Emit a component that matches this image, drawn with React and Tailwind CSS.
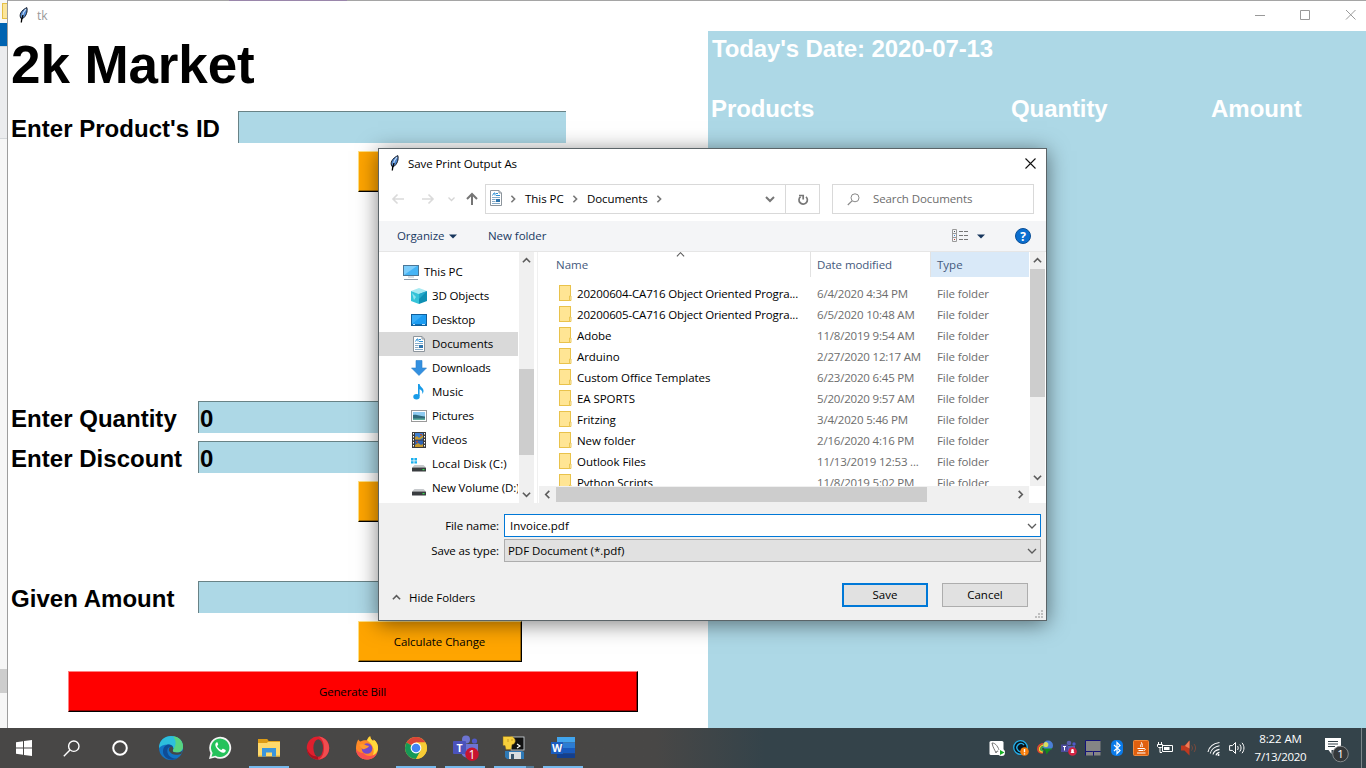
import React from "react";

const places = [
  { name: "3D Objects", icon: "cube", tr: "tracking-[-0.13px]" },
  { name: "Desktop", icon: "desktop", tr: "tracking-[-0.2px]" },
  { name: "Documents", icon: "doc", tr: "tracking-[-0.05px]", selected: true },
  { name: "Downloads", icon: "down", tr: "tracking-[-0.15px]" },
  { name: "Music", icon: "music", tr: "tracking-[0px]" },
  { name: "Pictures", icon: "picture", tr: "tracking-[-0.15px]" },
  { name: "Videos", icon: "video", tr: "tracking-[-0.1px]" },
  { name: "Local Disk (C:)", icon: "diskc", tr: "tracking-[0.08px]" },
  { name: "New Volume (D:)", icon: "disk", tr: "tracking-[-0.1px]" },
];

const files = [
  ["20200604-CA716 Object Oriented Progra...", "6/4/2020 4:34 PM"],
  ["20200605-CA716 Object Oriented Progra...", "6/5/2020 10:48 AM"],
  ["Adobe", "11/8/2019 9:54 AM"],
  ["Arduino", "2/27/2020 12:17 AM"],
  ["Custom Office Templates", "6/23/2020 6:45 PM"],
  ["EA SPORTS", "5/20/2020 9:57 AM"],
  ["Fritzing", "3/4/2020 5:46 PM"],
  ["New folder", "2/16/2020 4:16 PM"],
  ["Outlook Files", "11/13/2019 12:53 ..."],
  ["Python Scripts", "11/8/2019 5:02 PM"],
];

function Feather() {
  return (
    <svg width="12" height="16" viewBox="0 0 12 16" className="shrink-0">
      <path d="M3 11.5 C0.8 8 3 3.5 8.8 0.6 C9.8 4 8.5 9.5 4 12 Z" fill="#4d86cf" stroke="#10151f" strokeWidth="1" />
      <path d="M8 1.8 C5.5 4.5 4.6 7 4 10" stroke="#cfe2f7" strokeWidth="1.1" fill="none" />
      <path d="M5 8 C4 10.5 3.4 12.5 3.3 15.5" stroke="#000" strokeWidth="1.3" fill="none" />
    </svg>
  );
}

function DocIcon() {
  return (
    <svg width="16" height="16" viewBox="0 0 16 16" className="shrink-0">
      <path d="M2.5 .5h8.500l2.500 2.500v12.500h-11z" fill="#fff" stroke="#8d959c" />
      <path d="M11 .5v2.500h2.500" fill="none" stroke="#8d959c" />
      <path d="M4.500 5.500 6 3h1v2.500M8 3.500h2M8 5.500h4" stroke="#2a8fd4" fill="none" />
      <path d="M4 7.500h8M4 9.500h3.500M4 11.500h3.500M4 13.500h8" stroke="#86abc8" />
      <rect x="8" y="9" width="4" height="3" fill="#2f75ad" />
    </svg>
  );
}

function PlaceIcon({ kind }) {
  if (kind === "doc") return <DocIcon />;
  return (
    <svg width="16" height="16" viewBox="0 0 16 16" className="shrink-0">
      {kind === "pc" && (
        <>
          <rect x=".5" y="1.500" width="15" height="10" fill="#45b4f5" stroke="#4a7797" />
          <path d="M1 11 14 2H1z" fill="#7ccdfb" />
          <path d="M5 13h6" stroke="#b4bfc8" />
          <path d="M1 15.500h14" stroke="#8f9dab" />
        </>
      )}
      {kind === "cube" && (
        <>
          <path d="M8 0 16 3 8 6 0 3z" fill="#a8eaf2" />
          <path d="M0 3 8 6v10L0 13z" fill="#35c3d8" />
          <path d="M16 3 8 6v10l8-3z" fill="#0d8fb3" />
          <path d="M1 5 5 9 3 12z" fill="#8fe3ee" />
          <path d="M16 3 8 6v5z" fill="#22a9cb" />
        </>
      )}
      {kind === "desktop" && (
        <>
          <rect x=".5" y="2.500" width="15" height="11" fill="#1b9cf2" stroke="#0f5f9c" />
          <path d="M1 12 12 3H1z" fill="#38adf8" />
          <path d="M1 12.500h14" stroke="#0b6db5" />
          <path d="M2 12.500h2M11 12.500h3" stroke="#b8e0fb" />
        </>
      )}
      {kind === "down" && <path d="M5 .5h6v7.500h4.500L8 15.500.5 8H5z" fill="#3390e0" stroke="#2b7fca" strokeWidth=".6" />}
      {kind === "music" && (
        <>
          <path d="M7 0h1.600c.4 3 4.200 3.800 3.900 7.200-.1 1.300-.7 2.100-1.300 2.800.6-2.500-.5-4-2.600-4.700V12H7z" fill="#189be8" />
          <ellipse cx="5.500" cy="12.800" rx="3.200" ry="2.700" fill="#189be8" />
        </>
      )}
      {kind === "picture" && (
        <>
          <rect x=".5" y="2.500" width="15" height="11" fill="#fff" stroke="#9a9a9a" />
          <rect x="2" y="4" width="12" height="8" fill="#8fcbf0" />
          <path d="M2 7c4-.8 6 1.200 12 1.500V12H2z" fill="#2f6b7b" />
          <path d="M2 10.500h12V12H2z" fill="#5fae9e" />
        </>
      )}
      {kind === "video" && (
        <>
          <rect x="1" y="0" width="14" height="16" fill="#3b3b3b" />
          <rect x="4" y="1" width="8" height="6.500" fill="#3f7fd0" />
          <rect x="4" y="8.500" width="8" height="6.500" fill="#2d62b5" />
          <path d="M4 5.500l2-1.500 2 2 4-3v2.500l-3 2H4zM4 13l3-2 3 2 2-1v3H4z" fill="#c79a2c" />
          <path d="M9 2h2v1.500H9zM5 9h2v1.500H5z" fill="#b94d2b" />
          <path d="M2.500 1v14M13.500 1v14" stroke="#fff" strokeDasharray="1.500 1.500" />
        </>
      )}
      {(kind === "disk" || kind === "diskc") && (
        <>
          <path d="M3.500 9h9L15 11.500H1z" fill="#c6c9cc" />
          <rect x="1" y="11.500" width="14" height="4" rx=".6" fill="#3a3d40" />
          <rect x="11.500" y="13" width="2" height="1.200" fill="#35e04c" />
        </>
      )}
      {kind === "diskc" && <path d="M0 2h2.600v2.400H0zM3.400 2H6v2.400H3.400zM0 5.200h2.600v2.400H0zM3.400 5.200H6v2.400H3.400z" fill="#1bb0ee" />}
    </svg>
  );
}

function FolderIcon() {
  return (
    <svg width="14" height="16" viewBox="0 0 14 16" className="-mt-[2px] shrink-0">
      <rect x="1" y="0" width="12" height="16" fill="#e9c24b" />
      <rect x="2" y="1" width="10" height="14" fill="#ffe594" />
      <path d="M11.500 15.500v-4.500h1.500v4.500z" fill="#fff0bd" stroke="#e9c24b" strokeWidth=".9" />
    </svg>
  );
}

function Chevron({ dir = "down", size = 9, width = 1.8, color = "#5c5c5c" }) {
  const d = {
    down: "M1 3l4 4 4-4",
    up: "M1 7l4-4 4 4",
    left: "M7 1L3 5l4 4",
    right: "M3 1l4 4-4 4",
  }[dir];
  return (
    <svg width={size} height={size} viewBox="0 0 10 10" className="shrink-0">
      <path d={d} fill="none" stroke={color} strokeWidth={width} />
    </svg>
  );
}

function Field({ label, wide, value }) {
  return (
    <div className="flex h-10 items-start pl-[3px]">
      <div className={wide ? "w-[227px] pt-2 leading-[28px] tracking-[0.03px]" : "w-[187px] pt-2 leading-[28px] tracking-[0.03px]"}>{label}</div>
      <div className="mt-1 h-8 w-[328px] border-t border-l border-[#688286] bg-[#add8e6] pl-[1px] leading-[33px]">
        {value}
      </div>
    </div>
  );
}

function OrangeButton({ children }) {
  return (
    <div className="ml-[350px] flex h-[41px] w-[164px] border-t border-r border-b border-l border-t-[#ffe080] border-r-black border-b-black border-l-[#ffe080]">
      <div className="flex flex-1 items-center justify-center border-r border-b border-[#a86d00] bg-[#ffa500] pt-[2px] font-['Open_Sans',sans-serif] text-[11.5px] font-normal tracking-[-0.05px]">
        {children}
      </div>
    </div>
  );
}

function MarketPanel() {
  return (
    <div className="flex w-[700px] flex-col bg-white font-['Liberation_Sans',sans-serif] text-2xl font-bold text-black">
      <div className="h-[76px] pt-[3px] pl-[3px] text-[53px] leading-[61px] tracking-[-0.1px]">2k Market</div>
      <Field label="Enter Product's ID" wide />
      <div className="h-[250px] pt-1"><OrangeButton /></div>
      <Field label="Enter Quantity" value="0" />
      <Field label="Enter Discount" value="0" />
      <div className="h-[100px] pt-1"><OrangeButton /></div>
      <Field label="Given Amount" />
      <div className="h-[50px] pt-1"><OrangeButton>Calculate Change</OrangeButton></div>
      <div className="mt-[4px] ml-[60px] flex h-[41px] w-[570px] border border-t-[#ff8080] border-r-black border-b-black border-l-[#ff8080]">
        <div className="flex flex-1 items-center justify-center border-r border-b border-[#a00000] bg-[#ff0000] pt-[2px] font-['Open_Sans',sans-serif] text-[11.5px] font-normal tracking-[-0.15px]">
          Generate Bill
        </div>
      </div>
    </div>
  );
}

function BillPanel() {
  return (
    <div className="flex-1 bg-[#add8e6] font-['Liberation_Sans',sans-serif] text-2xl leading-[28px] font-bold text-white">
      <div className="pt-1 pl-1 tracking-[-0.13px]">Today's Date: 2020-07-13</div>
      <div className="mt-8 flex pl-[3px]">
        <div className="w-[300px] tracking-[-0.1px]">Products</div>
        <div className="w-[200px] tracking-[-0.1px]">Quantity</div>
        <div>Amount</div>
      </div>
    </div>
  );
}

function Sidebar() {
  return (
    <div className="flex w-[160px] bg-white">
      <div className="w-[139px] overflow-hidden pt-2 whitespace-nowrap">
        <div className="flex h-6 items-center gap-[5px] pl-6">
          <PlaceIcon kind="pc" />
          <span className="pb-[2px] tracking-[-0.05px]">This PC</span>
        </div>
        {places.map((p) => (
          <div key={p.name} className={p.selected ? "flex h-6 items-center gap-[5px] bg-[#d9d9d9] pl-8" : "flex h-6 items-center gap-[5px] pl-8"}>
            <PlaceIcon kind={p.icon} />
            <span className={`pb-[2px] ${p.tr}`}>{p.name}</span>
          </div>
        ))}
      </div>
      <div className="ml-[1px] flex w-[15px] flex-col items-center bg-[#f0f0f0]">
        <div className="flex h-[117px] items-start pt-1"><Chevron dir="up" /></div>
        <div className="h-[86px] w-full bg-[#cdcdcd]" />
        <div className="flex flex-1 items-end pb-[4px]"><Chevron /></div>
      </div>
      <div className="ml-[3px] w-[1px] bg-[#f0f0f0]" />
    </div>
  );
}

function FileList() {
  return (
    <div className="flex min-w-0 flex-1 flex-col bg-white">
      <div className="flex h-[234px]">
        <div className="flex w-[490px] flex-col overflow-hidden">
          <div className="flex h-[25px] shrink-0 text-[#44597c]">
            <div className="flex w-[272px] border-r border-[#e2e2e2] pl-[17px]">
              <span className="w-[120px] pt-[4px]">Name</span>
              <div className="-mt-[2px]"><Chevron dir="up" width={1.2} /></div>
            </div>
            <div className="w-[120px] border-r border-[#e2e2e2] pt-[4px] pl-[6px] tracking-[-0.08px]">Date modified</div>
            <div className="flex-1 bg-[#d9e9f8] pt-[4px] pl-[6px]">Type</div>
          </div>
          <div className="pt-[6px] whitespace-nowrap">
            {files.map(([name, date], i) => (
              <div key={name} className="flex h-[21px] items-center pl-[19px]">
                <FolderIcon />
                <span className={i < 2 ? "w-[240px] pl-[5px] tracking-[-0.15px]" : "w-[240px] pl-[5px] tracking-[-0.06px]"}>{name}</span>
                <span className="w-[120px] pl-[5px] tracking-[-0.19px] text-[#6d6d6d]">{date}</span>
                <span className="pl-[5px] tracking-[-0.1px] text-[#6d6d6d]">File folder</span>
              </div>
            ))}
          </div>
        </div>
        <div className="ml-[1px] flex w-[15px] flex-col items-center bg-[#f0f0f0]">
          <div className="flex h-[17px] items-start pt-1"><Chevron dir="up" /></div>
          <div className="h-[128px] w-full bg-[#cdcdcd]" />
          <div className="flex flex-1 items-end pb-[4px]"><Chevron /></div>
        </div>
      </div>
      <div className="flex flex-1">
        <div className="flex w-[490px] items-center bg-[#f0f0f0]">
          <div className="flex w-[17px] pl-1"><Chevron dir="left" /></div>
          <div className="h-[15px] w-[371px] bg-[#cdcdcd]" />
          <div className="ml-[89px]"><Chevron dir="right" /></div>
        </div>
      </div>
    </div>
  );
}

function SaveDialog() {
  return (
    <div className="absolute top-[148px] left-[378px] flex h-[473px] w-[669px] flex-col border border-[#5b6468] bg-white font-['Open_Sans',sans-serif] text-[11.5px] leading-[17px] text-black shadow-[0_3px_20px_rgba(0,0,0,0.5)]">
      <div className="flex h-[35px] items-start pt-[6px] pr-[10px] pl-[10px]">
        <Feather />
        <span className="ml-[7px] flex-1 tracking-[-0.08px]">Save Print Output As</span>
        <svg width="11" height="11" viewBox="0 0 11 11" className="mt-[3px]">
          <path d="M.5 .5l10 10M10.500 .5l-10 10" stroke="#111" strokeWidth="1.1" />
        </svg>
      </div>
      <div className="flex h-[30px] items-center">
        <svg width="106" height="16" viewBox="0 0 106 16" fill="none" className="shrink-0">
          <path d="M25 8H14M18.500 3.500 14 8l4.500 4.500M43 8h11M49.500 3.500 54 8l-4.500 4.500" stroke="#dadada" strokeWidth="1.6" />
          <path d="M69.500 6.500 72.500 9.500l3-3" stroke="#d5d5d5" strokeWidth="1.3" />
          <path d="M93 14V3M88 8l5-5 5 5" stroke="#757575" strokeWidth="2" />
        </svg>
        <div className="flex h-[30px] w-[335px] items-center border border-[#d9d9d9]">
          <div className="ml-[2px] pb-[2px]"><DocIcon /></div>
          <div className="ml-[4px] flex w-[17px] pl-[1px]"><Chevron dir="right" size={8} width={2} color="#777" /></div>
          <span className="w-[46px] pb-[2px] tracking-[-0.05px]">This PC</span>
          <Chevron dir="right" size={8} width={2} color="#777" />
          <span className="ml-[8px] w-[68px] pb-[2px] tracking-[-0.1px]">Documents</span>
          <Chevron dir="right" size={8} width={2} color="#777" />
          <div className="flex h-full flex-1 items-center justify-end border-r border-[#d9d9d9] pr-[10px]">
            <Chevron size={10} width={2} color="#777" />
          </div>
          <div className="flex w-[33px] justify-center">
            <svg width="12" height="12" viewBox="0 0 12 12" fill="none" className="mt-[1px]">
              <path d="M9 2.800A4.200 4.200 0 1 1 3.600 2.600" stroke="#777" strokeWidth="1.7" />
              <path d="M2 1.500h4.200v4" stroke="#777" strokeWidth="1.7" />
            </svg>
          </div>
        </div>
        <div className="ml-[12px] flex h-[30px] w-[202px] items-center border border-[#d9d9d9] pl-[14px]">
          <svg width="13" height="13" viewBox="0 0 13 13" fill="none">
            <circle cx="8" cy="4.800" r="4" stroke="#888" />
            <path d="M5 7.800.8 12" stroke="#888" strokeWidth="1.2" />
          </svg>
          <span className="ml-[13px] pb-[2px] tracking-[-0.1px] text-[#6d6d6d]">Search Documents</span>
        </div>
      </div>
      <div className="mt-[7px] flex h-[31px] items-center border-b border-[#e6e6e6] bg-[#f4f5f7] pl-[18px] text-[#1b3a63]">
        <span className="w-[52px] pb-[2px] tracking-[-0.1px]">Organize</span>
        <svg width="8" height="5" viewBox="0 0 8 5"><path d="M0 .5h8L4 4.500z" fill="#17365d" /></svg>
        <span className="ml-[31px] flex-1 pb-[2px] tracking-[-0.05px]">New folder</span>
        <svg width="17" height="13" viewBox="0 0 17 13" fill="none" className="-mt-[1px]">
          <path d="M.5 .5h4v12h-4zM.5 4.500h4M.5 8.500h4" stroke="#9a9a9a" />
          <path d="M2 2.500h1" stroke="#555" /><path d="M2 6.500h1" stroke="#3b82d6" /><path d="M2 10.500h1" stroke="#c0392b" />
          <path d="M7 2.500h4M12 2.500h4M7 6.500h4M12 6.500h4M7 10.500h4M12 10.500h4" stroke="#777" />
        </svg>
        <svg width="8" height="5" viewBox="0 0 8 5" className="ml-[8px]"><path d="M0 .5h8L4 4.500z" fill="#17365d" /></svg>
        <div className="mr-[15px] ml-[30px] flex h-4 w-4 items-center justify-center rounded-full border border-[#0b4f97] bg-[#0b6fd0] text-[12px] font-bold text-white">?</div>
      </div>
      <div className="flex h-[251px]">
        <Sidebar />
        <FileList />
      </div>
      <div className="flex flex-1 flex-col bg-[#f0f0f0]">
        <div className="mt-[11px] flex h-[23px] items-center">
          <span className="w-[125px] pr-[5px] text-right tracking-[-0.1px]">File name:</span>
          <div className="flex h-[23px] w-[537px] items-center justify-between border border-[#0078d7] bg-white pr-[3px] pl-[5px]">
            <span className="pb-[1px]">Invoice.pdf</span><Chevron width={1.3} size={10} />
          </div>
        </div>
        <div className="mt-[2px] flex h-[23px] items-center">
          <span className="w-[125px] pr-[5px] text-right tracking-[-0.1px]">Save as type:</span>
          <div className="flex h-[23px] w-[537px] items-center justify-between border border-[#adadad] bg-[#e1e1e1] pr-[3px] pl-[3px]">
            <span className="tracking-[-0.05px]">PDF Document (*.pdf)</span><Chevron width={1.3} size={10} />
          </div>
        </div>
        <div className="mt-[21px] flex h-6 items-center pl-[13px]">
          <div className="mt-[5px] flex flex-1 items-center">
            <Chevron dir="up" />
            <span className="ml-[8px] tracking-[-0.1px]">Hide Folders</span>
          </div>
          <div className="flex h-6 w-[86px] items-center justify-center border-2 border-[#0078d7] bg-[#e1e1e1] pb-[2px]">Save</div>
          <div className="mr-[18px] ml-[14px] flex h-6 w-[86px] items-center justify-center border border-[#adadad] bg-[#e1e1e1] pb-[2px]">Cancel</div>
        </div>
        <svg width="8" height="8" viewBox="0 0 8 8" className="mt-[3px] mr-[3px] self-end" fill="#bfbfbf">
          <path d="M6 0h2v2H6zM3 3h2v2H3zM6 3h2v2H6zM0 6h2v2H0zM3 6h2v2H3zM6 6h2v2H6z" />
        </svg>
      </div>
    </div>
  );
}

const appIcons = {
  edge: (
    <>
      <circle cx="12" cy="12" r="12" fill="#1273c4" />
      <path d="M0 12C0 4 6 0 12 0c7 0 12 4.500 12 10.500 0 4-3 6-6.500 6-2.500 0-4-1-3.700-2.300 1-1.500.8-5.500-3.800-5.700C5 8.300 1.500 10 0 12z" fill="#2dbfdc" />
      <path d="M14 .3C20 1 24 5 24 10.500c0 4-3 6-6.500 6-2.500 0-4-1-3.700-2.300C17 10 18 5 14 .3z" fill="#58d47f" />
      <path d="M9 12c-2.500 5 2 11 9 10.500-7 3.500-14-1-14-7C4 11 7 8.500 10 8.500c3 .2 4.500 2 4.200 4.500C13 11 10.500 10.500 9 12z" fill="#0f4c96" />
      <path d="M13.800 14.200C14.600 13 14.400 11 12.800 10.700 10.500 10.500 9 13 10.500 15.600c2 3.400 7.500 4.400 12.800 1.600-1 .3-1 .8-.2-2.200-2 1.500-4 1.700-5.600 1.500-2.500 0-4-1-3.700-2.300z" fill="#464646" />
    </>
  ),
  whatsapp: (
    <>
      <path d="M1 23 2.500 17A11 11 0 1 1 7 21.500z" fill="#f5f5f5" />
      <path d="M3.500 20.700 4.600 17A9.200 9.200 0 1 1 7.500 19.700z" fill="#25c25b" />
      <path d="M8.500 6.500c-2 1.300-1.300 4 1 6.800 2.800 3.300 6.500 4.800 8 2.200.5-1 .2-1.500-.3-1.800l-2-1c-.5-.2-.8 0-1.500 1-.3.300-.6.300-1 .1-1.600-.8-2.700-1.900-3.500-3.300-.2-.4 0-.6.3-.9.900-1 .8-1.200.6-1.600l-.6-1.500c-.2-.4-.7-.4-1 0z" fill="#fff" />
    </>
  ),
  explorer: (
    <>
      <path d="M1 3h9l1.500 2H23v4H1z" fill="#e5a51c" />
      <path d="M1 6h22v14.500H1z" fill="#ffd96b" />
      <path d="M1 3h9l1.500 2L10 7H1z" fill="#dd9b15" />
      <path d="M5 12h14v8.500h-4v-4H9v4H5z" fill="#3b95dc" />
      <path d="M1 19.500h4v1H1zM19 19.500h4v1h-4z" fill="#eab83a" />
    </>
  ),
  opera: (
    <>
      <ellipse cx="12" cy="12" rx="11.200" ry="11.500" fill="#e01f2d" />
      <path d="M12 .5c6 0 11.200 5 11.200 11.500S18 23.500 12 23.500c3.500-1 6-5 6-11.500S15.500 1.500 12 .5z" fill="#ef4d50" />
      <path d="M12 23.500C4 23 .8 17 .8 12c1.500 5 5 8.500 11.200 8.500z" fill="#aa1320" />
      <ellipse cx="12.200" cy="12" rx="4.800" ry="8.700" fill="#464646" />
    </>
  ),
  firefox: (
    <>
      <path d="M2.500 5c.3-.8.700-1.200 1-1.500.4 1.200 1 1.700 2 2C8 4 10 4 12 4.300 13 2 14 .8 15.200.3c.2 2 1.200 3.500 3 4.700.5-.4.500-1 .4-1.500C22 6 23.500 9.500 23 13.500c-.8 6-5.200 10-11 10C5.500 23.500 1 18.500 1 12.500 1 9.500 1.500 7 2.500 5z" fill="#ff8a26" />
      <path d="M12 4.300C13 2 14 .8 15.200.3c.2 2 1.200 3.500 3 4.700.5-.4.500-1 .4-1.500C22 6 23.500 9.500 23 13.500c-1 3-3 5-5 6 1.500-5 1-10-6-15.200z" fill="#ffd93b" />
      <path d="M1 13c0 6 4.500 10.500 11 10.500 5 0 8.500-2.500 10-6.500-4 4-11 4-13.500 0C5 17 2 15 1 13z" fill="#f8504f" />
      <circle cx="12" cy="12.500" r="5.300" fill="#7449c9" />
      <path d="M4 9c3-1.500 5-1 7 .2 1 .5 2.500.4 3 .8-1 2-3 2-4.500 3-1.500 1-3-.5-5.500-4z" fill="#ff9a2c" />
    </>
  ),
  chrome: (
    <>
      <circle cx="12" cy="12" r="11" fill="#f4c430" />
      <path d="M12 12 2.500 6.500A11 11 0 0 1 21.500 6.500H12z" fill="#db4437" />
      <path d="M2.500 6.500A11 11 0 0 0 12 23l4.500-8.500L12 12z" fill="#159957" />
      <path d="M12 6.500h9.500A11 11 0 0 1 12 23l5-8.500z" fill="#f7cb35" />
      <circle cx="12" cy="12" r="5.400" fill="#fff" />
      <circle cx="12" cy="12" r="4.300" fill="#4285f4" />
    </>
  ),
  python: (
    <>
      <rect x="9" y="1" width="13" height="13" fill="#111" stroke="#d5dde2" strokeWidth=".8" />
      <path d="M15 8l3 2-3 2" stroke="#fff" fill="none" strokeWidth="1.2" />
      <path d="M3 15h17l2 1v7H5l-2-2z" fill="#2f79b5" />
      <rect x="7" y="16" width="12" height="7" fill="#d9dde0" />
      <rect x="9" y="18" width="3" height="5" fill="#39566d" />
      <path d="M1 .5h8c3 0 3 2 4 3 1 3-1 5-3 5l-1 5H4l-1-4H1z" fill="#f8cf3c" stroke="#8c6c14" strokeWidth=".5" />
      <path d="M6 3v3M9 4h2" stroke="#c79b1f" />
    </>
  ),
};

function AppSlot({ open, icon, children, split }) {
  return (
    <div className="flex h-10 w-10 flex-col items-center justify-between">
      <div className="flex h-[38px] items-center pt-[2px]">
        {icon ? <svg width="24" height="24" viewBox="0 0 24 24">{appIcons[icon]}</svg> : children}
      </div>
      <div className={open ? "flex h-[2px] w-full bg-[#76b9ed]" : "h-[2px] w-full"}>
        {split && <div className="ml-8 h-[2px] w-2 bg-[#527b98]" />}
      </div>
    </div>
  );
}

function TrayIcon({ children }) {
  return (
    <svg width="16" height="16" viewBox="0 0 16 16" fill="none" className="mx-1 shrink-0">
      {children}
    </svg>
  );
}

function Taskbar() {
  return (
    <div className="flex h-10 items-center bg-linear-to-r from-[#484746] from-48% to-[#34434a] to-56% font-['Open_Sans',sans-serif] text-white">
      <div className="flex w-12 justify-center">
        <svg width="16" height="16" viewBox="0 0 16 16" fill="#fff">
          <path d="M0 2.200 7 1.200v6.400H0zM8 1l8-1v7.600H8zM0 8.500h7v6.300l-7-1zM8 8.500h8V16l-8-1z" />
        </svg>
      </div>
      <div className="flex w-12 justify-center">
        <svg width="17" height="17" viewBox="0 0 17 17" fill="none" stroke="#fff" strokeWidth="1.4" className="mr-[1px]">
          <circle cx="10.800" cy="6.200" r="5.200" /><path d="M7 10 .8 16.200" />
        </svg>
      </div>
      <div className="flex w-12 justify-center">
        <svg width="16" height="16" viewBox="0 0 16 16" fill="none" stroke="#fff" strokeWidth="2"><circle cx="8" cy="8" r="6.800" /></svg>
      </div>
      <div className="ml-[7px] flex flex-1 gap-[9px]">
        <AppSlot icon="edge" />
        <AppSlot icon="whatsapp" />
        <AppSlot icon="explorer" open />
        <AppSlot icon="opera" />
        <AppSlot icon="firefox" />
        <AppSlot icon="chrome" open />
        <AppSlot open>
          <svg width="26" height="26" viewBox="0 0 26 26" className="ml-[1px]">
            <circle cx="13" cy="4.500" r="4" fill="#6d74d2" />
            <circle cx="21.500" cy="6" r="2.600" fill="#5059c9" />
            <path d="M8 9h17v7c0 3-2 5-5 5-5 4-12 1-12-5z" fill="#6d74d2" />
            <rect x="0" y="6" width="13" height="13" rx="1" fill="#4b53bc" />
            <text x="6.500" y="16.500" fontSize="10.5" fontWeight="bold" fill="#fff" textAnchor="middle" fontFamily="Open Sans">T</text>
            <circle cx="19" cy="19.300" r="6.700" fill="#c8152f" />
            <text x="19" y="23.500" fontSize="12" fill="#fff" textAnchor="middle" fontFamily="Open Sans">1</text>
          </svg>
        </AppSlot>
        <AppSlot icon="python" open split />
        <AppSlot open>
          <svg width="24" height="24" viewBox="0 0 24 24">
            <path d="M6 1h18v5.500H6z" fill="#41a5ee" /><path d="M6 6.500h18V12H6z" fill="#2b7cd3" />
            <path d="M6 12h18v5.500H6z" fill="#185abd" /><path d="M6 17.500h18V22H6z" fill="#123f8f" />
            <rect x="0" y="6" width="12" height="12" fill="#1b5cbe" />
            <text x="6" y="15.800" fontSize="10.5" fontWeight="bold" fill="#fff" textAnchor="middle" fontFamily="Open Sans">W</text>
          </svg>
        </AppSlot>
      </div>
      <div className="flex items-center">
        <TrayIcon>
          <rect x=".5" y="1" width="14" height="14" rx="1.500" fill="#fff" />
          <path d="M3 3c4 0 6 4 8 9l-3-1-1 2c-1-3-3-5-4-10z" stroke="#666" strokeWidth=".9" />
          <circle cx="12.500" cy="12.500" r="3.500" fill="#fff" /><path d="M11 10l4.500 2.500L11 15z" fill="#18b026" />
        </TrayIcon>
        <TrayIcon>
          <circle cx="7.500" cy="7.500" r="6.800" fill="#08131b" stroke="#22aeea" strokeWidth="1.3" />
          <path d="M11 5a4 4 0 1 0-1 6" stroke="#22aeea" strokeWidth="1.4" />
          <circle cx="11.500" cy="11.500" r="4.300" fill="#f77f0c" /><path d="M11.500 9v3.200M11.500 13.200v1.300" stroke="#fff" strokeWidth="1.4" />
        </TrayIcon>
        <TrayIcon>
          <path d="M8 3.500C3 3.500.8 6 .8 9c0 2.500 2 4 5 4" stroke="#e3452d" strokeWidth="1.6" />
          <path d="M8 5C4.500 5 2.500 7 2.500 9c0 2 1.500 3 3.500 3" stroke="#f4d02d" strokeWidth="1.6" />
          <path d="M8 6.500C5.500 6.500 4.200 8 4.200 9c0 1 1 1.700 2.200 1.700" stroke="#3ab54a" strokeWidth="1.6" />
          <circle cx="11" cy="5.500" r="5" fill="#4b7fd6" /><path d="M8 2c3 0 4 2 3 4S7 7 6.500 6 6.800 3 8 2z" fill="#d9dc60" />
          <path d="M6 8.500h9.500L12 11l-2.500 3.500L8.500 11z" fill="#138a1d" />
        </TrayIcon>
        <TrayIcon>
          <circle cx="8" cy="3" r="2.300" fill="#5b61b5" /><path d="M6 6h8v5H6z" fill="#5b61b5" />
          <circle cx="13" cy="4" r="1.700" fill="#5059c9" />
          <rect x="0" y="4.500" width="7" height="7.500" fill="#4b4a9c" /><path d="M2 6.500h3M3.500 6.500v4" stroke="#fff" />
          <circle cx="11.500" cy="11.500" r="4.300" fill="#d32443" /><path d="M9.500 13h4l-.7-1V10.300a1.300 1.300 0 0 0-2.600 0V12z" fill="#fff" />
        </TrayIcon>
        <TrayIcon>
          <path d="M.5 .5h15v10.500H.5z" fill="#858585" />
          <path d="M.5 11V.5h15" stroke="#13137a" />
          <path d="M1 12h7v3.500H1zM9 12h6.500v3.500H9z" fill="#858585" />
          <path d="M.5 15.500v-4h7M8.500 15.500v-4h7" stroke="#13137a" />
        </TrayIcon>
        <TrayIcon>
          <rect x="2" y="0" width="12" height="16" rx="5" fill="#0a7bea" />
          <path d="M5 5l6 5.500L8 13.500v-11l3 3L5 11" stroke="#fff" strokeWidth="1.2" />
        </TrayIcon>
        <TrayIcon>
          <rect x=".5" y=".5" width="15" height="15" rx="1" fill="#e0600f" stroke="#f08a3c" />
          <path d="M8 2c2 2-2 3 0 5M10 3.500c-1.500 1-.5 1.500-.8 3.500" stroke="#fff" />
          <path d="M4.500 8.500H11c2 0 1.500 2-.5 2.200M5.500 10.500h4.500M4 13h8.500" stroke="#fff" />
        </TrayIcon>
        <TrayIcon>
          <path d="M5.500 5.500h10v6h-10z" stroke="#fff" /><path d="M7 7h5.500v3H7z" fill="#fff" />
          <path d="M1.500 2v2.500M4.500 2v2.500M.5 4.500h5v2l-1 1h-3l-1-1zM3 7.500v5h2" stroke="#fff" />
        </TrayIcon>
        <TrayIcon>
          <path d="M0 5.500h3.500L8.500 .5v15l-5-5H0z" fill="#c0391f" /><path d="M4 6l4.500-5.500v8z" fill="#f07b56" />
          <path d="M10.500 5.500c1.200 1.500 1.200 3.500 0 5M13 4c2 2.500 2 5.500 0 8" stroke="#7c4a3c" />
        </TrayIcon>
        <TrayIcon>
          <path d="M3 12C4 7 8 3.500 14.500 2.500M5.300 13.500C6 9.500 10 6.500 14.500 5.800M8 14.500C8.500 12 11 10 14.500 9.400M11 15.300c.3-1.500 1.500-2.500 3.500-2.900" stroke="#fff" strokeWidth="1.1" />
          <circle cx="13.500" cy="15" r="1" fill="#fff" />
        </TrayIcon>
        <TrayIcon>
          <path d="M.6 5.600h2.800L6.500 2.500v11L3.400 10.400H.6z" stroke="#fff" />
          <path d="M8.500 6c.9 1.200.9 2.800 0 4M10.800 4.500c1.700 2 1.700 5 0 7M13 2.800c2.600 3 2.600 7.400 0 10.400" stroke="#fff" />
        </TrayIcon>
        <div className="w-[64px] pr-[1px] text-center text-[11.5px] leading-[18px] tracking-[-0.1px]">
          <div>8:22 AM</div>
          <div className="tracking-[-0.3px]">7/13/2020</div>
        </div>
        <svg width="26" height="26" viewBox="0 0 26 26" className="mt-[3px] ml-[11px]">
          <path d="M1 1h16v12H7.500v4L4.500 13H1z" fill="#fff" />
          <path d="M4 4.500h10M4 7h10M4 9.500h7" stroke="#34434a" />
          <circle cx="16.500" cy="17" r="7.800" fill="#34383a" stroke="#85898b" strokeWidth="1" />
          <text x="16.500" y="21.200" fontSize="11.5" fill="#fff" textAnchor="middle" fontFamily="Open Sans">1</text>
        </svg>
        <div className="mr-1 ml-[11px] h-10 w-[1px] bg-[#7c868a]" />
      </div>
    </div>
  );
}

export default function App() {
  return (
    <div className="relative flex h-[768px] w-[1366px] flex-col overflow-hidden bg-white">
      <div className="flex h-[728px]">
        <div className="flex w-[7px] shrink-0 flex-col bg-[#f6f6f6]">
          <div className="mt-[3px] mb-1 ml-[2px] h-4 border border-r-0 border-[#e5bf45] bg-[#fbe59a]" />
          <div className="h-[23px] bg-[#0063b1]" />
          <div className="h-[93px] border-t border-b border-[#d4d7da] bg-[#ebecee]" />
          <div className="mt-[530px] h-6 bg-[#cdcdcd]" />
        </div>
        <div className="flex min-w-0 flex-1 flex-col border-l border-[#9d9d9d] bg-white">
          <div className="flex h-[1px] bg-[#a5a5a5]"><div className="ml-[221px] w-[118px] bg-[#9a86ab]" /></div>
          <div className="flex h-[30px] items-center pr-[10px] pb-[2px] pl-[10px] font-['Open_Sans',sans-serif] text-[12px] text-[#999]">
            <Feather />
            <span className="ml-[7px] flex-1 pt-[2px]">tk</span>
            <svg width="101" height="12" viewBox="0 0 101 12" fill="none" stroke="#999">
              <path d="M0 6.500h10" />
              <path d="M45.500 1.500h9v9h-9z" />
              <path d="M91 1l9.500 9.500M100.500 1 91 10.500" />
            </svg>
          </div>
          <div className="flex flex-1">
            <MarketPanel />
            <BillPanel />
          </div>
        </div>
      </div>
      <Taskbar />
      <SaveDialog />
    </div>
  );
}
